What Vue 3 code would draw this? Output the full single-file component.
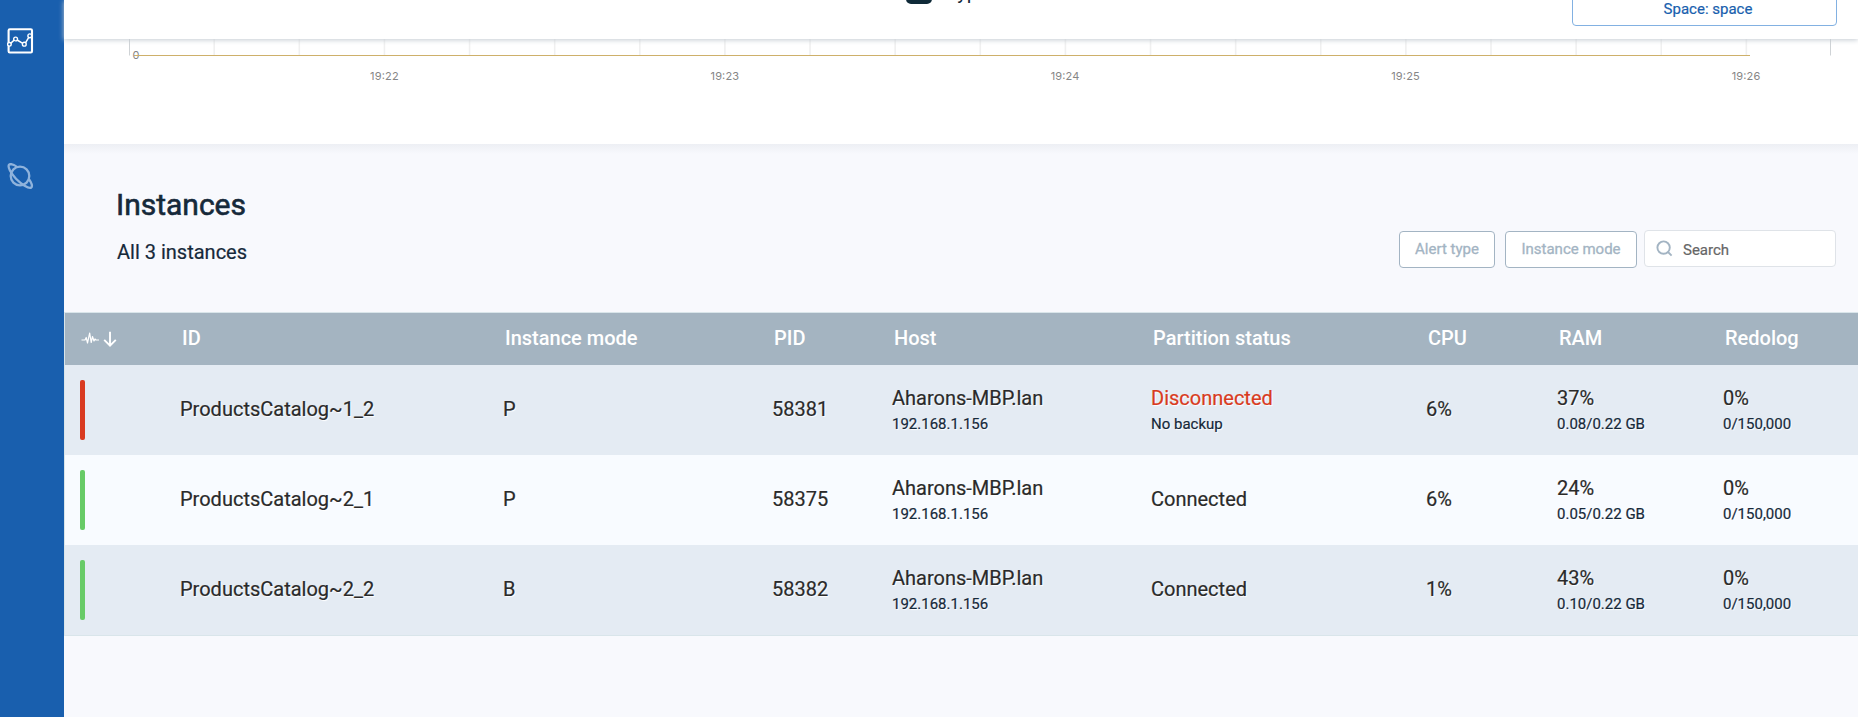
<script setup>
const ticks = Array.from({ length: 19 }, (_, i) => 149.4 + i * 85.12)
const times = [
  { label: '19:22', x: 320.3 },
  { label: '19:23', x: 660.8 },
  { label: '19:24', x: 1001 },
  { label: '19:25', x: 1341.5 },
  { label: '19:26', x: 1682 },
]
const columns = ['ID', 'Instance mode', 'PID', 'Host', 'Partition status', 'CPU', 'RAM', 'Redolog']
const rows = [
  { ok: false, id: 'ProductsCatalog~1_2', mode: 'P', pid: '58381', status: 'Disconnected', note: 'No backup', cpu: '6%', ram: '37%', mem: '0.08/0.22 GB' },
  { ok: true, id: 'ProductsCatalog~2_1', mode: 'P', pid: '58375', status: 'Connected', note: '', cpu: '6%', ram: '24%', mem: '0.05/0.22 GB' },
  { ok: true, id: 'ProductsCatalog~2_2', mode: 'B', pid: '58382', status: 'Connected', note: '', cpu: '1%', ram: '43%', mem: '0.10/0.22 GB' },
]
</script>

<template>
  <div class="app">
    <nav class="sidebar">
      <svg class="nav-icon" width="27" height="27" viewBox="0 0 27 27" fill="none" stroke="#fff">
        <rect x="1.6" y="2.3" width="23.4" height="23.2" rx="1.2" stroke-width="2.1" />
        <path d="M3.4 16.6 7.2 13M10.1 13 15.8 16.4M18.5 15.8 21.9 10.2" stroke-width="1.5" />
        <g stroke-width="1.4" fill="#195fae">
          <circle cx="2.4" cy="17.3" r="1.8" />
          <circle cx="8.6" cy="12" r="1.9" />
          <circle cx="17.3" cy="17.2" r="1.9" />
          <circle cx="22.8" cy="8.8" r="1.9" />
        </g>
      </svg>
      <svg class="nav-icon planet" width="27" height="27" viewBox="0 0 27 27" fill="none" stroke="#8fb3dc" stroke-width="2.3">
        <circle cx="13" cy="13" r="9.3" />
        <path d="M10.3 4.1C6.3 1.2 3 .8 2 1.8.5 3.8 3.6 10 9 15.7 14.5 21.3 21.5 25.9 24.2 24.6 25.7 23.5 24.8 20 22 16.2" />
      </svg>
    </nav>

    <main class="content">
      <header class="topbar">
        <div class="type">
          <span class="type-box"></span>
          <span class="type-label">Type</span>
        </div>
        <div class="space">Space: space</div>
      </header>

      <section class="chart">
        <svg class="plot" width="1794" height="26" viewBox="0 0 1794 26">
          <g class="grid">
            <rect v-for="t in ticks" :key="t" :x="t" y="0" width="1.6" height="16" />
          </g>
          <rect class="axis" x="65" y="0" width="1" height="16.5" />
          <rect class="axis" x="1766" y="0" width="1" height="16.5" />
          <text class="zero" x="68.5" y="20">0</text>
          <rect class="series" x="70" y="16" width="1616" height="1" />
        </svg>
        <svg class="times" width="1794" height="24">
          <text v-for="t in times" :key="t.label" :x="t.x" y="15" textLength="28.6">{{ t.label }}</text>
        </svg>
      </section>

      <section class="instances">
        <div class="heading">
          <div>
            <h2>Instances</h2>
            <p>All 3 instances</p>
          </div>
          <div class="filters">
            <button class="filter alert">Alert type</button>
            <button class="filter mode">Instance mode</button>
            <div class="search">
              <svg width="17" height="17" viewBox="0 0 17 17" fill="none" stroke="#a3b4c3" stroke-width="1.9">
                <circle cx="7.6" cy="7.6" r="6.2" />
                <path d="M12 12 15.6 15.6" />
              </svg>
              <span>Search</span>
            </div>
          </div>
        </div>

        <div class="table">
          <div class="row head">
            <div class="sort">
              <svg width="19" height="14" viewBox="0 0 19 14" fill="none" stroke="#fff" stroke-width="1.2" stroke-linejoin="round">
                <path d="M.5 8H4L5.2 5.5 6.5 11 8.7 1 10.2 10.5 11.5 4.5 13 9 14 7 15 8H18" />
              </svg>
              <svg width="14" height="16" viewBox="0 0 14 16" fill="none" stroke="#fff" stroke-width="1.9">
                <path d="M7 .8V14.5M1.2 8.8 7 14.6 12.8 8.8" />
              </svg>
            </div>
            <div v-for="c in columns" :key="c">{{ c }}</div>
          </div>
          <div v-for="r in rows" :key="r.id" class="row body">
            <div class="state"><span class="bar" :class="{ ok: r.ok }"></span></div>
            <div>{{ r.id }}</div>
            <div>{{ r.mode }}</div>
            <div>{{ r.pid }}</div>
            <div class="pair">Aharons-MBP.lan<small>192.168.1.156</small></div>
            <div :class="{ pair: r.note }">
              <span :class="{ bad: !r.ok }">{{ r.status }}</span>
              <small v-if="r.note">{{ r.note }}</small>
            </div>
            <div>{{ r.cpu }}</div>
            <div class="pair">{{ r.ram }}<small>{{ r.mem }}</small></div>
            <div class="pair">0%<small>0/150,000</small></div>
          </div>
        </div>
      </section>
    </main>
  </div>
</template>

<style>
body {
  background: #f8f9fd;
}
</style>

<style scoped>
.app {
  display: flex;
  width: 1858px;
  height: 717px;
  overflow: hidden;
  font-family: Roboto, sans-serif;
  color: #16293a;
  background: #f8f9fd;
}
.sidebar {
  width: 64px;
  flex: none;
  background: #195fae;
  padding: 27px 0 0 7px;
  box-sizing: border-box;
}
.nav-icon {
  display: block;
}
.planet {
  margin-top: 109px;
}
.content {
  width: 1794px;
  flex: none;
}
.topbar {
  position: relative;
  z-index: 1;
  display: flex;
  justify-content: space-between;
  height: 39px;
  background: #fff;
  box-shadow: 0 1px 5px #c5ccd3;
  box-sizing: border-box;
  padding: 0 21px 0 842px;
}
.type {
  display: flex;
  height: 4px;
}
.type-box {
  width: 26px;
  height: 26px;
  margin-top: -22px;
  border-radius: 5px;
  background: #0f2a38;
}
.type-label {
  margin: -19px 0 0 14px;
  font-size: 20px;
  line-height: 23px;
}
.space {
  width: 265px;
  height: 40px;
  margin-top: -14px;
  box-sizing: border-box;
  border: 1px solid #82b1e2;
  border-radius: 4px;
  color: #195fae;
  font-size: 15px;
  line-height: 45px;
  text-align: center;
  padding-left: 7px;
  -webkit-text-stroke: 0.2px;
}
.chart {
  height: 105px;
  background: #fff;
}
.plot,
.times {
  display: block;
}
.grid {
  fill: #f0f0f0;
}
.axis {
  fill: #cfd3d6;
}
.series {
  fill: #ceb06a;
}
.zero,
.times text {
  font: 11px Inter, sans-serif;
  fill: #868686;
}
.times text {
  text-anchor: middle;
}
.instances {
  height: 573px;
  background: linear-gradient(#edeff4, #f8f9fd 10px);
}
.heading {
  display: flex;
  justify-content: space-between;
  height: 168px;
  box-sizing: border-box;
  padding: 43px 22px 0 52px;
}
h2 {
  margin: 0;
  font-size: 30px;
  line-height: 36px;
  font-weight: 400;
  -webkit-text-stroke: 0.6px;
}
p {
  margin: 17px 0 0 1px;
  font-size: 20px;
  line-height: 24px;
  -webkit-text-stroke: 0.2px;
}
.filters {
  display: flex;
  align-items: flex-start;
  padding-top: 43px;
}
.filter {
  height: 37px;
  margin: 1px 10px 0 0;
  padding: 0 0 1px;
  border: 1px solid #a3b4c3;
  border-radius: 4px;
  background: #fff;
  color: #a3b4c3;
  font: 15px Roboto, sans-serif;
  -webkit-text-stroke: 0.3px;
}
.alert {
  width: 96px;
}
.mode {
  width: 132px;
  margin-right: 7px;
}
.search {
  display: flex;
  align-items: center;
  gap: 10px;
  width: 192px;
  height: 37px;
  box-sizing: border-box;
  padding-left: 11px;
  border: 1px solid #dfe3e8;
  border-radius: 4px;
  background: #fff;
  color: #666;
  font-size: 15px;
  -webkit-text-stroke: 0.2px;
}
.search span {
  padding-top: 2px;
}
.table {
  border: solid #d9e5ea;
  border-width: 1px 0 1px 1px;
}
.row {
  display: grid;
  grid-template-columns: 115px 323px 269px 120px 259px 275px 131px 166px auto;
  align-items: center;
}
.head {
  height: 52px;
  background: #a4b4c1;
  color: #fff;
  font-size: 20px;
  font-weight: 500;
}
.head > div:not(.sort) {
  padding: 0 0 2px 2px;
}
.sort {
  display: flex;
  align-items: center;
  gap: 3px;
  padding-left: 16px;
}
.body {
  height: 90px;
  background: #e4ebf3;
  color: #2a2a2a;
  font-size: 20px;
  line-height: 24px;
  text-shadow: 1px 1px 1px #fff;
  -webkit-text-stroke: 0.2px;
}
.body > div:not(.state):not(.pair) {
  padding-bottom: 2px;
}
.body > .pair {
  padding-bottom: 1px;
}
.body:nth-child(odd) {
  background: #f8fbff;
}
small {
  display: block;
  margin-top: 4px;
  font-size: 15px;
  line-height: 20px;
  color: #16293a;
}
.bad {
  color: #d93a20;
}
.state {
  padding-left: 15px;
}
.bar {
  display: block;
  width: 5px;
  height: 60px;
  border-radius: 2px;
  background: #d93a20;
}
.bar.ok {
  background: #68cb67;
}
</style>
